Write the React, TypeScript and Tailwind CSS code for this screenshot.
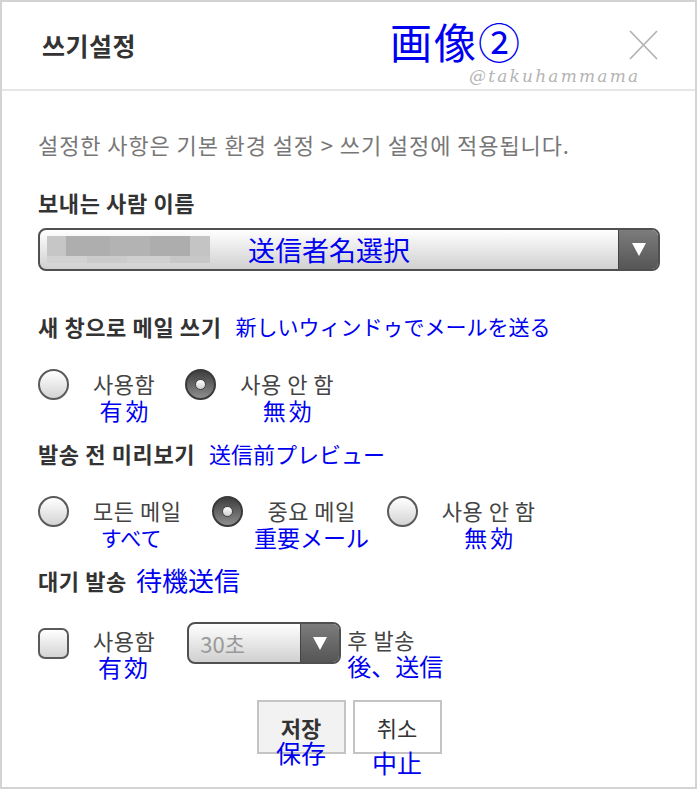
import React from "react";

const kr = "font-['Noto_Sans_CJK_KR','Noto_Sans',sans-serif]";
const jp = "font-['Noto_Sans_CJK_JP',sans-serif] text-[#0000f0]";
const label = "text-[22px] font-bold leading-[28px] tracking-[0.6px] text-[#333]";
const optText = "whitespace-nowrap text-[22px] leading-[28px] tracking-[0.5px] text-[#444]";

function Radio({ on }: { on?: boolean }) {
  if (on) {
    return (
      <span className="flex h-[31px] w-[31px] shrink-0 items-center justify-center rounded-full border-2 border-[#3a3a3a] bg-linear-to-b from-[#3f3f3f] to-[#8e8e8e]">
        <span className="h-[11px] w-[11px] rounded-full border border-[#444] bg-linear-to-b from-white to-[#cfcfcf]" />
      </span>
    );
  }
  return <span className="h-[31px] w-[31px] shrink-0 rounded-full border-2 border-[#5a5a5a] bg-linear-to-b from-white to-[#d4d4d4]" />;
}

function Arrow() {
  return (
    <svg width="14" height="13" viewBox="0 0 14 13">
      <polygon points="0,0 14,0 7,13" fill="#fff" />
    </svg>
  );
}

type OptProps = {
  on?: boolean;
  label: string;
  note: string;
  noteClass: string;
};

function Option({ on, label, note, noteClass }: OptProps) {
  return (
    <div className="flex items-start gap-[24px]">
      <Radio on={on} />
      <div className="flex flex-col items-center">
        <span className={`h-[28px] ${optText}`}>{label}</span>
        <div className="flex h-[26px] w-0 justify-center">
          <span className={`whitespace-nowrap leading-[26px] ${jp} ${noteClass}`}>{note}</span>
        </div>
      </div>
    </div>
  );
}

export default function App() {
  return (
    <div className={`h-[790px] w-[697px] bg-white ${kr}`}>
      <div className="h-[789px] w-[697px] border-2 border-[#d3d3d3]">
        {/* header */}
        <div className="relative flex h-[89px] items-center border-b-2 border-[#e6e6e6]">
          <div className="w-[388px] pl-[40px] text-[25px] font-bold tracking-[0.5px] text-[#333]">쓰기설정</div>
          <span className={`-mt-[10px] text-[42px] leading-[46px] tracking-[2px] ${jp}`}>画像②</span>
          <button type="button" className="ml-auto mr-[37px] -mt-[2px]">
            <svg width="29" height="30" viewBox="0 0 29 30">
              <path d="M1 1 L28 29 M28 1 L1 29" stroke="#b4b4b4" strokeWidth="1.8" fill="none" />
            </svg>
          </button>
          <span className="absolute left-[467px] top-[62px] font-['DejaVu_Serif',serif] text-[17px] italic tracking-[2.2px] text-[#b5b5b5]">
            @takuhammama
          </span>
        </div>

        {/* body */}
        <div className="pl-[36px] pr-[35px]">
          <p className="mt-[39px] text-[22px] leading-[28px] tracking-[0.9px] text-[#777]">
            설정한 사항은 기본 환경 설정 &gt; 쓰기 설정에 적용됩니다.
          </p>

          <h3 className={`mt-[30px] ${label}`}>보내는 사람 이름</h3>

          <div className="mt-[12px] flex h-[43px] overflow-hidden rounded-[8px] border-2 border-[#505050] bg-linear-to-b from-white to-[#d0d0d0]">
            <div className="flex flex-1 items-center pl-[7px]">
              <div className="flex h-[27px] w-[163px] flex-col">
                <div className="flex h-[20px]">
                  <div className="w-[19px] bg-[#c6c6c6]" />
                  <div className="w-[44px] bg-[#aeaeae]" />
                  <div className="w-[40px] bg-[#b3b3b3]" />
                  <div className="w-[40px] bg-[#adadad]" />
                  <div className="w-[20px] bg-[#c4c4c4]" />
                </div>
                <div className="flex h-[7px]">
                  <div className="w-[40px] bg-[#d2d2d2]" />
                  <div className="w-[40px] bg-[#cbcbcb]" />
                  <div className="w-[43px] bg-[#d0d0d0]" />
                  <div className="w-[40px] bg-[#c8c8c8]" />
                </div>
              </div>
              <span className={`ml-[38px] text-[27px] leading-[32px] ${jp}`}>送信者名選択</span>
            </div>
            <div className="flex w-[40px] items-center justify-center border-l border-[#444] bg-linear-to-b from-[#7c7c7c] to-[#565656]">
              <Arrow />
            </div>
          </div>

          <div className="mt-[41px] flex items-center gap-[14px]">
            <h3 className={label}>새 창으로 메일 쓰기</h3>
            <span className={`text-[21px] leading-[28px] ${jp}`}>新しいウィンドゥでメールを送る</span>
          </div>

          <div className="mt-[29px] flex items-start gap-[30px]">
            <Option label="사용함" note="有効" noteClass="text-[23px] tracking-[3px] pl-[3px]" />
            <Option on label="사용 안 함" note="無効" noteClass="text-[23px] tracking-[3px] pl-[3px]" />
          </div>

          <div className="mt-[16px] flex items-center gap-[14px]">
            <h3 className={label}>발송 전 미리보기</h3>
            <span className={`text-[22px] leading-[28px] ${jp}`}>送信前プレビュー</span>
          </div>

          <div className="mt-[29px] flex items-start gap-[31px]">
            <Option label="모든 메일" note="すべて" noteClass="text-[21px] pr-[12px]" />
            <Option on label="중요 메일" note="重要メール" noteClass="text-[23px]" />
            <Option label="사용 안 함" note="無効" noteClass="text-[23px] tracking-[3px] pl-[3px]" />
          </div>

          <div className="mt-[16px] flex items-center gap-[9px]">
            <h3 className={label}>대기 발송</h3>
            <span className={`text-[26px] leading-[28px] ${jp}`}>待機送信</span>
          </div>

          <div className="mt-[28px] flex items-start">
            <span className="mt-[6px] h-[31px] w-[31px] shrink-0 rounded-[7px] border-2 border-[#5a5a5a] bg-linear-to-b from-white to-[#d4d4d4]" />
            <div className="ml-[24px] mt-[4px] flex flex-col items-center">
              <span className={`h-[28px] ${optText}`}>사용함</span>
              <span className={`text-[24px] leading-[26px] tracking-[2px] ${jp}`}>有効</span>
            </div>
            <div className="ml-[32px] flex h-[42px] w-[154px] overflow-hidden rounded-[8px] border-2 border-[#505050] bg-linear-to-b from-white to-[#d0d0d0]">
              <div className="flex flex-1 items-center pl-[11px] text-[22px] text-[#999]">30초</div>
              <div className="flex w-[39px] items-center justify-center border-l border-[#444] bg-linear-to-b from-[#7c7c7c] to-[#565656]">
                <Arrow />
              </div>
            </div>
            <div className="ml-[6px] mt-[3px] flex flex-col items-start">
              <span className={`h-[28px] ${optText}`}>후 발송</span>
              <span className={`whitespace-nowrap text-[24px] leading-[26px] ${jp}`}>後、送信</span>
            </div>
          </div>

          <div className="mt-[20px] flex justify-center gap-[7px]">
            <div className="relative">
              <div className="flex h-[54px] w-[89px] items-center justify-center border-2 border-[#c4c4c4] bg-[#f2f2f2] text-[22px] font-bold text-[#333]">
                저장
              </div>
              <span className={`absolute left-1/2 top-[39px] -translate-x-1/2 whitespace-nowrap text-[25px] leading-[26px] ${jp}`}>保存</span>
            </div>
            <div className="relative">
              <div className="flex h-[54px] w-[89px] items-center justify-center border-2 border-[#c4c4c4] bg-white text-[22px] text-[#333]">
                취소
              </div>
              <span className={`absolute left-1/2 top-[49px] -translate-x-1/2 whitespace-nowrap text-[25px] leading-[26px] ${jp}`}>中止</span>
            </div>
          </div>
        </div>
      </div>
    </div>
  );
}
